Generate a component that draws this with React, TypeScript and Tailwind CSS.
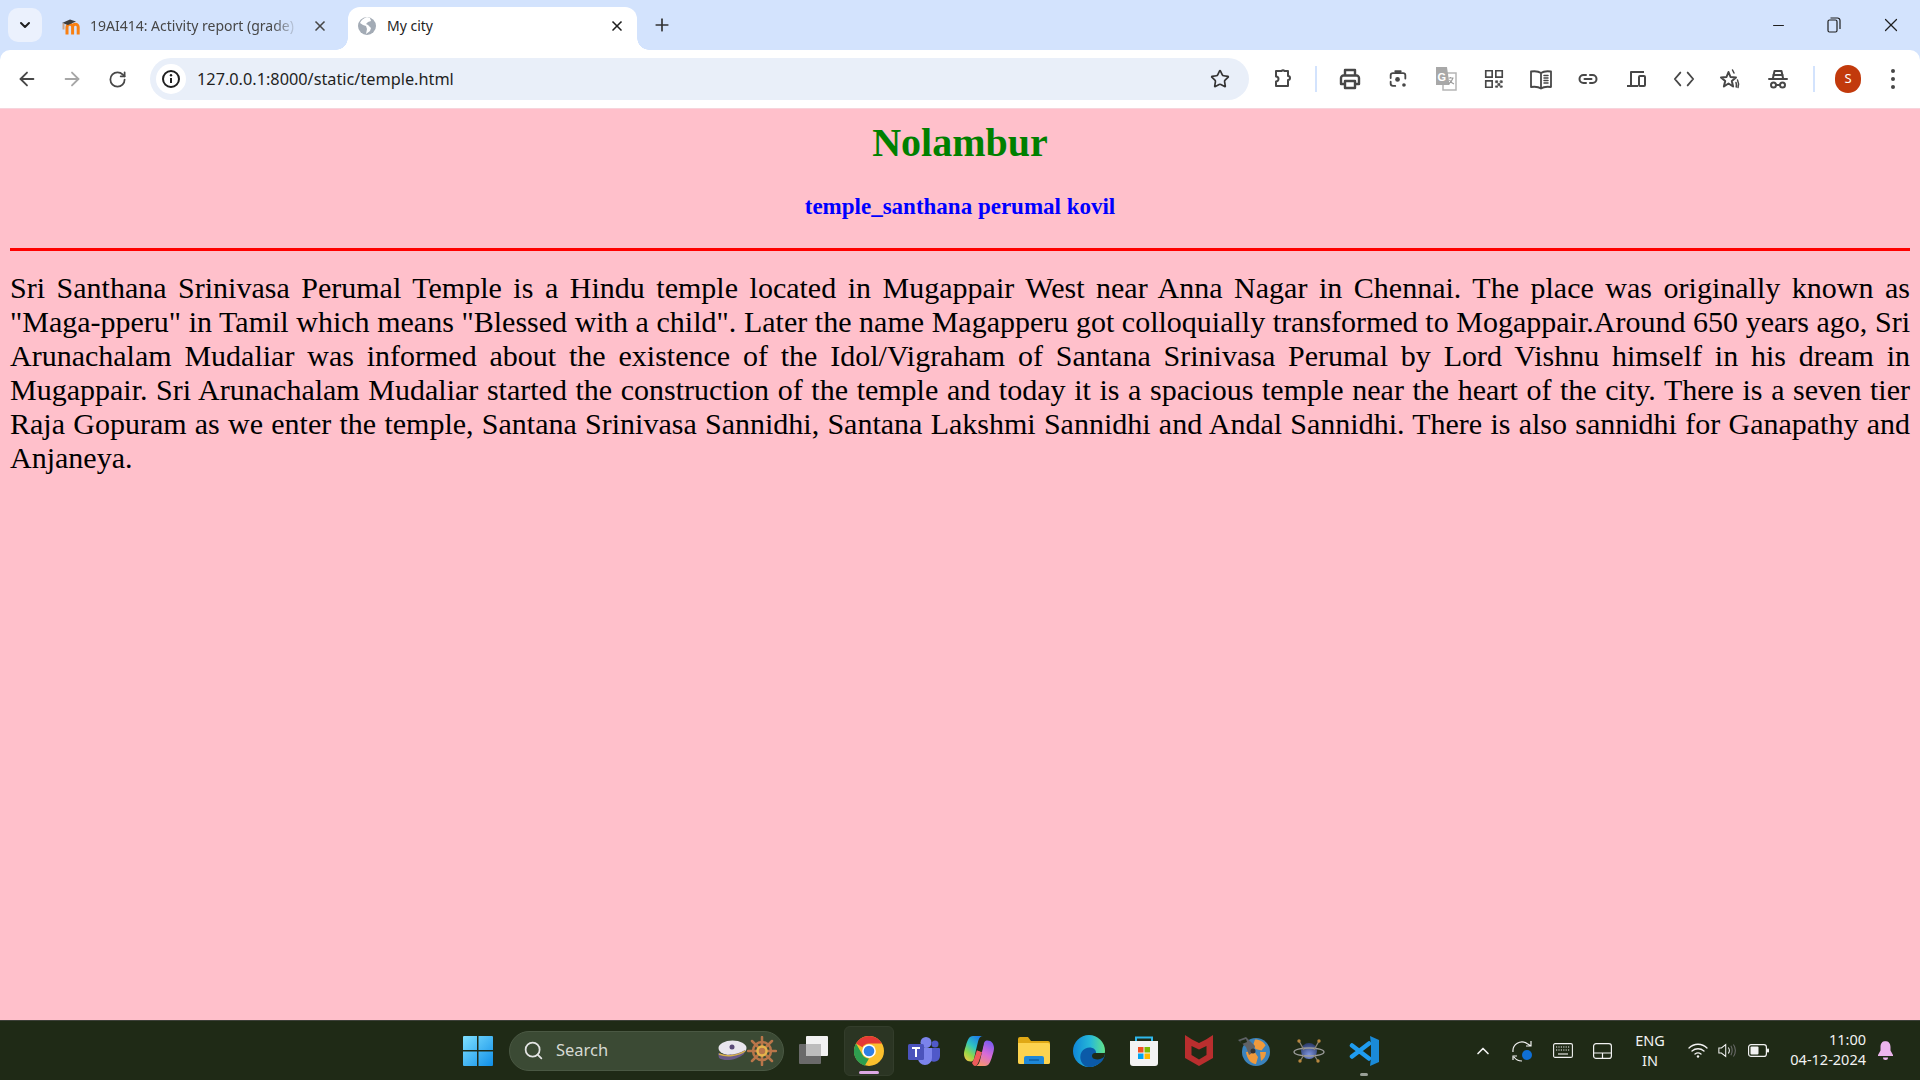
import React from "react";
import { ArrowLeft, ArrowRight, RotateCw, Star, Plus, X, ChevronDown, ChevronUp, Minus, Search } from "lucide-react";

const Slot = ({ w, children }: { w: string; children: React.ReactNode }) => (
  <div className={`${w} flex items-center justify-center shrink-0`}>{children}</div>
);

const I = ({ size = 24, children, vb = "0 0 24 24", stroke = "#474747", sw = 2 }: any) => (
  <svg width={size} height={size} viewBox={vb} fill="none" stroke={stroke} strokeWidth={sw} strokeLinecap="round" strokeLinejoin="round">{children}</svg>
);

const Moodle = () => (
  <svg width="21" height="18" viewBox="0 0 21 18" fill="none">
    <path d="M6 17.500V10a2.800 2.800 0 0 1 5.600 0v7.500M11.600 10a2.800 2.800 0 0 1 5.600 0v7.500" stroke="#f98012" strokeWidth="3" />
    <path d="M1 6l8-3.500 6 2-8 3.500z" fill="#3f3f3f" />
    <path d="M2.500 6.500v6" stroke="#c9a58a" strokeWidth="2" />
  </svg>
);
const Globe = () => (
  <svg width="18" height="18" viewBox="0 0 18 18">
    <circle cx="9" cy="9" r="9" fill="#a3abb5" />
    <path d="M9 0c-3 1-6 3-7 6l3 2 3 1 1 3-1 5 4-3 1-3-3-3-2-1 2-2 3-1-1-3z" fill="#fff" />
  </svg>
);
const Puzzle = () => (
  <I size={24}><path d="M8 5h2.500a2 2 0 0 1 3 0H17v5a2 2 0 0 1 0 4v6H5v-4.500a2.500 2.500 0 0 0 0-5V5z" transform="translate(0 -1)" /></I>
);
const PrinterI = () => (
  <svg width="24" height="24" viewBox="0 0 24 24" fill="none" stroke="#474747" strokeWidth="2.400" strokeLinejoin="round">
    <path d="M7 8V3h10v5" />
    <path d="M6 17H3v-6a2.500 2.500 0 0 1 2.500-2.500h13A2.500 2.500 0 0 1 21 11v6h-3" />
    <path d="M7 14h10v7H7z" />
  </svg>
);
const Camera = () => (
  <I size={22} sw={2}>
    <path d="M9 3.500h6M4 11V8a2.500 2.500 0 0 1 2.500-2.500h11A2.500 2.500 0 0 1 20 8v3.500M4 15v2a2.500 2.500 0 0 0 2.500 2.500H9" />
    <circle cx="11.500" cy="12.500" r="2.600" fill="#474747" stroke="none" />
    <circle cx="18.500" cy="18.500" r="2" fill="#474747" stroke="none" />
  </I>
);
const Translate = () => (
  <svg width="22" height="24" viewBox="0 0 22 24">
    <rect x="8" y="6" width="13" height="17" fill="#fff" stroke="#b5b5b5" strokeWidth="1.500" />
    <path d="M1 0h11l2.500 18H1z" fill="#a8a8a8" />
    <text x="2.500" y="13.500" fontSize="11" fontWeight="700" fill="#fff" fontFamily="Liberation Sans, sans-serif">G</text>
    <path d="M13.500 11h5M15.500 10v1.500M18 11c-1 3-3 5-4.500 6M14.500 13c1 2 2.500 3 4.500 4" stroke="#9a9a9a" strokeWidth="1.100" fill="none" />
  </svg>
);
const Qr = () => (
  <I size={22} sw={1.8}>
    <path d="M3 3h7v7H3zM14 3h7v7h-7zM3 14h7v7H3z" strokeLinecap="butt" strokeLinejoin="miter" />
    <path d="M14 14h2v2h-2zM19 14h2v2h-2zM16.500 17h2v2h-2zM14 19.500h2v1.500h-2zM19 19.500h2v1.500h-2z" strokeWidth="0.800" fill="#474747" />
  </I>
);
const Book = () => (
  <I size={24} sw={1.8}>
    <path d="M12 6C10 4.500 6 4 2 4.500V20c4-.5 8 0 10 1.500 2-1.500 6-2 10-1.500V4.500C18 4 14 4.500 12 6zM12 6v15.500" />
    <path d="M15 8.500h4M15 11h4M15 13.500h4M15 16h4" strokeWidth="1.500" />
  </I>
);
const LinkI = () => (
  <I size={24} sw={2}>
    <path d="M10 8H7.500a4 4 0 0 0 0 8H10M14 8h2.500a4 4 0 0 1 0 8H14M8.500 12h7" />
  </I>
);
const Devices = () => (
  <I size={24} sw={2}>
    <path d="M20 5H7v13M3 19h11" strokeLinecap="butt" />
    <rect x="15" y="9" width="6" height="10" rx="1" />
  </I>
);
const CodeI = () => (
  <I size={22} sw={2}><path d="M8 5l-6 7 6 7M16 5l6 7-6 7" /></I>
);
const StarFx = () => (
  <I size={24} sw={2}>
    <path d="M10.500 5l2 5 5.500.5-4.200 3.500 1.300 5.500-4.600-3-4.600 3 1.300-5.500L3 10.500l5.500-.5z" />
    <path d="M14.500 3c.5 1 1 2 1.500 3M19.500 13c1 2 1.200 5 .5 7.500M18 15.500c.5 1.500.5 3 .2 4.500" strokeWidth="1.500" />
  </I>
);
const Spy = () => (
  <I size={24} sw={2}>
    <path d="M7 11l1.500-7h7L17 11M3 12h18" />
    <path d="M7.500 8h9" />
    <circle cx="7.500" cy="18" r="2.500" /><circle cx="16.500" cy="18" r="2.500" /><path d="M10 18h4" />
  </I>
);
const InfoI = () => (
  <svg width="22" height="22" viewBox="0 0 22 22" fill="none">
    <circle cx="11" cy="11" r="8" stroke="#1f1f1f" strokeWidth="2" />
    <path d="M11 10v5" stroke="#1f1f1f" strokeWidth="2" />
    <circle cx="11" cy="7.300" r="1.200" fill="#1f1f1f" />
  </svg>
);
const Restore = () => (
  <svg width="14" height="16" viewBox="0 0 14 16" fill="none" stroke="#1f1f1f" strokeWidth="1.200">
    <rect x="1" y="3" width="9" height="12" rx="1.500" />
    <path d="M3.500 1h7A2.500 2.500 0 0 1 13 3.500V12" />
  </svg>
);

const WinLogo = () => (
  <svg width="30" height="30" viewBox="0 0 30 30">
    <defs>
      <linearGradient id="wg" x1="0" y1="0" x2="1" y2="1"><stop offset="0" stopColor="#7fe0ff" /><stop offset="1" stopColor="#0f8fe8" /></linearGradient>
    </defs>
    <path d="M0 1a1 1 0 0 1 1-1h13v14H0zM15.500 0H29a1 1 0 0 1 1 1v13H15.500zM0 15.500h14V30H1a1 1 0 0 1-1-1zM15.500 15.500H30V29a1 1 0 0 1-1 1H15.500z" fill="url(#wg)" />
  </svg>
);
const Hat = () => (
  <svg width="30" height="22" viewBox="0 0 30 22">
    <ellipse cx="15.500" cy="8" rx="14" ry="7.500" fill="#e9e6ee" />
    <path d="M1 13c7 3 20 2 27-3l-1 4c-7 6-19 8-25 4z" fill="#6a5a88" />
    <path d="M2 14c7 3 19 2 26-3" stroke="#d8b24a" strokeWidth="1.500" fill="none" />
    <circle cx="15" cy="7" r="2.500" fill="#5a4a78" />
  </svg>
);
const Wheel = () => (
  <svg width="30" height="30" viewBox="0 0 30 30" fill="none">
    <g stroke="#b9764a" strokeWidth="2.500" strokeLinecap="round">
      <path d="M15 1v28M1 15h28M5 5l20 20M25 5L5 25" />
    </g>
    <circle cx="15" cy="15" r="9" stroke="#b9764a" strokeWidth="2.500" />
    <circle cx="15" cy="15" r="4.500" stroke="#e5b54c" strokeWidth="2.500" />
  </svg>
);
const TaskView = () => (
  <svg width="30" height="29" viewBox="0 0 30 29">
    <rect x="7" y="0" width="22" height="20" rx="1" fill="#f2f2f2" />
    <rect x="0" y="8" width="22" height="20" rx="1" fill="#6a6a6a" />
    <rect x="7" y="8" width="15" height="12" fill="#bdbdbd" />
  </svg>
);
const ChromeI = () => (
  <svg width="30" height="30" viewBox="0 0 48 48">
    <circle cx="24" cy="24" r="24" fill="#fbc02d" />
    <path d="M24 0a24 24 0 0 1 20.800 12H24a12 12 0 0 0-10.400 6L3.200 12A24 24 0 0 1 24 0z" fill="#e53935" />
    <path d="M3.200 12l10.400 18a12 12 0 0 0 10.400 6l-6.800 11.400A24 24 0 0 1 3.200 12z" fill="#2e9e4f" />
    <circle cx="24" cy="24" r="11" fill="#fff" />
    <circle cx="24" cy="24" r="8.500" fill="#2f7fe6" />
  </svg>
);
const Teams = () => (
  <svg width="32" height="28" viewBox="0 0 32 28">
    <circle cx="18" cy="5.500" r="5.500" fill="#7b83eb" />
    <circle cx="27" cy="7" r="3.500" fill="#5059c9" />
    <path d="M22 11h9a1 1 0 0 1 1 1v7a6 6 0 0 1-9 5z" fill="#5059c9" />
    <path d="M9 11h15v10a7 7 0 0 1-14 0z" fill="#7b83eb" />
    <rect x="0" y="7" width="16" height="16" rx="1.500" fill="#4b53bc" />
    <path d="M4 11h8M8 11v9" stroke="#fff" strokeWidth="2" />
  </svg>
);
const Copilot = () => (
  <svg width="30" height="30" viewBox="0 0 30 30">
    <defs>
      <linearGradient id="c1" x1="0.700" y1="0" x2="0.100" y2="1"><stop offset="0" stopColor="#1e7fe8" /><stop offset=".4" stopColor="#2fc4c0" /><stop offset=".7" stopColor="#8fd84a" /><stop offset="1" stopColor="#f7c948" /></linearGradient>
      <linearGradient id="c2" x1="0.700" y1="0" x2="0.300" y2="1"><stop offset="0" stopColor="#7a5bf0" /><stop offset=".5" stopColor="#d86bd8" /><stop offset="1" stopColor="#f7956a" /></linearGradient>
    </defs>
    <path d="M9 0h10c-2.500 0-3.800 1.500-4.800 5L12 14l-2 9c-.7 2-2 2.500-3.500 2.500C2.500 25.500 0 22 0 18c0-2 .7-5 1.800-8C3.500 4 5 0 9 0z" fill="url(#c1)" />
    <path d="M21 30H11c2.500 0 3.800-1.500 4.800-5l2.200-9 2-9c.7-2 2-2.500 3.500-2.500 4 0 6.500 3.500 6.500 7.500 0 2-.7 5-1.800 8C26.500 26 25 30 21 30z" fill="url(#c2)" />
    <path d="M10 23l3-9 5 2-3 9c-1 3-2.500 5-4 5-1 0-2-1-3-3z" fill="#ee5a5a" />
    <path d="M15.500 9l4-1-2 8-5-2z" fill="#1f2a16" />
  </svg>
);
const Folder = () => (
  <svg width="32" height="27" viewBox="0 0 32 27">
    <path d="M0 2a2 2 0 0 1 2-2h8l3 4h17a2 2 0 0 1 2 2v19a2 2 0 0 1-2 2H2a2 2 0 0 1-2-2z" fill="#e0a815" />
    <path d="M0 6h30a2 2 0 0 1 2 2v17a2 2 0 0 1-2 2H2a2 2 0 0 1-2-2z" fill="#fcd34f" />
    <path d="M6 27v-6a2 2 0 0 1 2-2h16a2 2 0 0 1 2 2v6z" fill="#1e88d8" />
    <path d="M11 23h10" stroke="#0c5fa5" strokeWidth="1.500" />
  </svg>
);
const Edge = () => (
  <svg width="32" height="32" viewBox="0 0 32 32">
    <defs>
      <linearGradient id="e1" x1="0" y1="0.500" x2="1" y2="0.500"><stop offset="0" stopColor="#0f86d8" /><stop offset=".55" stopColor="#27b9d8" /><stop offset="1" stopColor="#62e38a" /></linearGradient>
    </defs>
    <circle cx="16" cy="16" r="16" fill="url(#e1)" />
    <path d="M13 31.500C6 28 5 17 12.500 13.500 18 11 23.500 14 23 18l9 0c0 3-1 5-2.500 7.500C26 30 19 33.500 13 31.500z" fill="#0b5aa8" />
    <path d="M32 18H22c-3.500 0-4 4.500-1 5.800 3.500 1.200 7 .6 10-1.800.5-1.500 1-2.500 1-4z" fill="#1f2a16" />
  </svg>
);
const Store = () => (
  <svg width="30" height="30" viewBox="0 0 30 30">
    <path d="M7 5V1.500h16V5" fill="none" stroke="#2fb8ec" strokeWidth="2" />
    <path d="M1 5h28v22a3 3 0 0 1-3 3H4a3 3 0 0 1-3-3z" fill="#f3f3f3" />
    <rect x="9" y="11" width="5.500" height="5.500" fill="#f25022" /><rect x="15.500" y="11" width="5.500" height="5.500" fill="#7fba00" />
    <rect x="9" y="17.500" width="5.500" height="5.500" fill="#00a4ef" /><rect x="15.500" y="17.500" width="5.500" height="5.500" fill="#ffb900" />
  </svg>
);
const McAfee = () => (
  <svg width="28" height="31" viewBox="0 0 28 31">
    <path d="M0 0l7 4.500L14 8l7-3.500L28 0v23l-14 8-14-8z" fill="#b92e2e" />
    <path d="M6.500 11l7.500 3.500 7.500-3.500v9l-7.500 4.500-7.500-4.500z" fill="#1f2a16" />
  </svg>
);
const Orb = () => (
  <svg width="32" height="32" viewBox="0 0 32 32">
    <circle cx="18" cy="17" r="14" fill="#3b83bd" />
    <path d="M17 4.500c5 0 9 2.500 10.500 6l-4 5-6-1.500-2-5zM8 17l8-1 4 6-2 7c-5 0-9-5-10-12z" fill="#ef9a3c" />
    <path d="M22 17l6 0c0 4-2 7-5 9z" fill="#ef9a3c" />
    <path d="M0 5l8-3 9 9-3 7-3 2-3-8z" fill="#5f6266" />
    <path d="M2 6l6-2 1 3-5 2z" fill="#1f2a16" />
    <circle cx="15" cy="16" r="2.500" fill="#333" />
  </svg>
);
const Atom = () => (
  <svg width="32" height="28" viewBox="0 0 32 28" fill="none">
    <defs>
      <radialGradient id="at" cx=".5" cy=".75" r=".7"><stop offset="0" stopColor="#7f96e0" /><stop offset="1" stopColor="#2f3f70" /></radialGradient>
    </defs>
    <circle cx="16" cy="14" r="8" fill="url(#at)" />
    <ellipse cx="16" cy="15" rx="15" ry="4" stroke="#9c9c9c" strokeWidth="1.300" />
    <path d="M6 4l5 9M26 4l-5 9M7 24l4-6M25 24l-4-6" stroke="#8a8478" strokeWidth="1.300" />
    <circle cx="6" cy="4" r="1.700" fill="#b9873f" /><circle cx="26" cy="4" r="1.700" fill="#b9873f" />
    <circle cx="7" cy="24" r="1.700" fill="#b9873f" /><circle cx="25" cy="24" r="1.700" fill="#b9873f" />
  </svg>
);
const VSCode = () => (
  <svg width="30" height="30" viewBox="0 0 30 30" fill="none">
    <path d="M3 9.500l17 13M3 20.500l17-13" stroke="#1f9cf0" strokeWidth="4.500" strokeLinecap="round" />
    <path d="M21 0l9 4v22l-9 4 1-8V8z" fill="#1a8ad8" />
  </svg>
);

const W = "#f2f2f2";
const Sync = () => (
  <svg width="22" height="22" viewBox="0 0 22 22" fill="none" stroke={W} strokeWidth="1.200">
    <path d="M1 12a9 9 0 0 1 14-8.500L19 6M19 1v5h-5" />
    <path d="M1 20v-4h4M2 17c2 3 5 4 8 4" />
    <circle cx="15" cy="15" r="5" fill="#0f6fd6" stroke="none" />
  </svg>
);
const Kbd = () => (
  <svg width="20" height="15" viewBox="0 0 20 15" fill="none" stroke={W} strokeWidth="1.100">
    <rect x=".6" y=".6" width="18.800" height="13.800" rx="1.500" />
    <path d="M3 4h14M3 7h14" strokeDasharray="1.200 1.200" />
    <path d="M5 11h10" />
  </svg>
);
const Touchpad = () => (
  <svg width="19" height="16" viewBox="0 0 19 16" fill="none" stroke={W} strokeWidth="1.200">
    <rect x=".6" y=".6" width="17.800" height="14.800" rx="2.500" />
    <path d="M1 10h17M9.500 10v5" />
  </svg>
);
const Wifi = () => (
  <svg width="20" height="15" viewBox="0 0 20 15" fill="none" stroke={W} strokeWidth="1.300" strokeLinecap="round">
    <path d="M1 5c5-5 13-5 18 0M4 8c3.500-3 8.500-3 12 0M7 11c1.800-1.400 4.200-1.400 6 0" />
    <circle cx="10" cy="13.500" r="1.200" fill={W} stroke="none" />
  </svg>
);
const Vol = () => (
  <svg width="21" height="17" viewBox="0 0 21 17" fill="none" stroke={W} strokeWidth="1.200">
    <path d="M1 5.500h3L9 1.500v14L4 11.500H1z" />
    <path d="M12 5c1.500 2 1.500 5 0 7" />
    <path d="M15 3c2 3 2 8 0 11M18 1.500c3 4 3 10 0 14" stroke="#6e6e6e" />
  </svg>
);
const Batt = () => (
  <svg width="21" height="13" viewBox="0 0 21 13" fill="none">
    <rect x=".6" y=".6" width="17.800" height="11.800" rx="2.500" stroke={W} strokeWidth="1.200" />
    <rect x="2.500" y="2.500" width="8" height="8" rx="1" fill={W} />
    <rect x="19" y="4.500" width="2" height="4" rx=".8" fill={W} />
  </svg>
);
const BellI = () => (
  <svg width="17" height="19" viewBox="0 0 17 19" fill="#ecb4ec">
    <path d="M8.500 0C5 0 3.500 3 3.500 6v3.500L1 14v1h15v-1l-2.500-4.500V6c0-3-1.500-6-5.500-6z" />
    <path d="M6 16.500h5a2.500 2.500 0 0 1-5 0z" />
  </svg>
);

const TEXT = `Sri Santhana Srinivasa Perumal Temple is a Hindu temple located in Mugappair West near Anna Nagar in Chennai. The place was originally known as "Maga-pperu" in Tamil which means "Blessed with a child". Later the name Magapperu got colloquially transformed to Mogappair.Around 650 years ago, Sri Arunachalam Mudaliar was informed about the existence of the Idol/Vigraham of Santana Srinivasa Perumal by Lord Vishnu himself in his dream in Mugappair. Sri Arunachalam Mudaliar started the construction of the temple and today it is a spacious temple near the heart of the city. There is a seven tier Raja Gopuram as we enter the temple, Santana Srinivasa Sannidhi, Santana Lakshmi Sannidhi and Andal Sannidhi. There is also sannidhi for Ganapathy and Anjaneya.`;

const ui = "font-['Noto_Sans','Open_Sans',sans-serif]";

export default function App() {
  return (
    <div className={`w-[1920px] h-[1080px] flex flex-col overflow-hidden bg-[#d3e3fd] ${ui}`}>
      {/* tab strip */}
      <div className="h-[50px] shrink-0 bg-[#d3e3fd] flex items-end">
        <div className="ml-[8px] mb-[8px] w-[34px] h-[34px] rounded-[10px] bg-[#ebf1fd] flex items-center justify-center">
          <ChevronDown size={16} strokeWidth={3} color="#1f1f1f" />
        </div>
        <div className="ml-[19px] w-[287px] h-[43px] pb-[6px] flex items-center">
          <Moodle />
          <span className="ml-[8px] w-[208px] py-[2px] overflow-hidden whitespace-nowrap text-[14px] text-[#474747] [mask-image:linear-gradient(to_right,black_88%,transparent)]">19AI414: Activity report (grade)</span>
          <span className="ml-[14px] flex"><X size={16} strokeWidth={2.500} color="#474747" /></span>
        </div>
        <div className="w-[289px] h-[43px] bg-white rounded-t-[12px] flex items-center pl-[10px] pb-[6px] relative">
          <div className="absolute left-[-12px] bottom-0 w-[12px] h-[12px] bg-[radial-gradient(circle_at_0_0,#d3e3fd_11.500px,white_12px)]" />
          <div className="absolute right-[-12px] bottom-0 w-[12px] h-[12px] bg-[radial-gradient(circle_at_100%_0,#d3e3fd_11.500px,white_12px)]" />
          <Globe />
          <span className="ml-[11px] w-[222px] text-[14px] text-[#1f1f1f]">My city</span>
          <span className="flex"><X size={16} strokeWidth={2.500} color="#1f1f1f" /></span>
        </div>
        <div className="ml-[15px] mb-[15px] flex"><Plus size={20} strokeWidth={2} color="#333" /></div>
        <div className="ml-auto h-[50px] flex items-center">
          <Slot w="w-[56px]"><Minus size={17} strokeWidth={1.500} color="#1f1f1f" /></Slot>
          <Slot w="w-[56px]"><Restore /></Slot>
          <Slot w="w-[58px]"><X size={22} strokeWidth={1.300} color="#1f1f1f" /></Slot>
        </div>
      </div>

      {/* toolbar */}
      <div className="h-[59px] shrink-0 bg-white rounded-t-[10px] flex items-center border-b border-[#f6d4dc]">
        <Slot w="w-[54px]"><ArrowLeft size={22} color="#474747" /></Slot>
        <Slot w="w-[36px]"><ArrowRight size={22} color="#a6a6a6" /></Slot>
        <Slot w="w-[54px]"><RotateCw size={19} strokeWidth={2.200} color="#474747" /></Slot>
        <div className="ml-[6px] w-[1099px] h-[42px] rounded-full bg-[#e9eff9] flex items-center pl-[6px]">
          <div className="w-[30px] h-[30px] rounded-full bg-white flex items-center justify-center"><InfoI /></div>
          <span className="ml-[11px] text-[16.300px] text-[#1f1f1f] whitespace-nowrap">127.0.0.1:8000/static/temple.html</span>
          <div className="ml-auto mr-[19px] flex"><Star size={20} strokeWidth={2} color="#333" /></div>
        </div>
        <div className="ml-[10px] w-[48px] flex justify-center"><Puzzle /></div>
        <div className="ml-[8px] w-[2px] h-[26px] bg-[#d3e3fd]" />
        <Slot w="w-[66px]"><PrinterI /></Slot>
        <Slot w="w-[30px]"><Camera /></Slot>
        <Slot w="w-[66px]"><Translate /></Slot>
        <Slot w="w-[30px]"><Qr /></Slot>
        <Slot w="w-[64px]"><Book /></Slot>
        <Slot w="w-[30px]"><LinkI /></Slot>
        <Slot w="w-[66px]"><Devices /></Slot>
        <Slot w="w-[30px]"><CodeI /></Slot>
        <Slot w="w-[62px]"><StarFx /></Slot>
        <Slot w="w-[34px]"><Spy /></Slot>
        <div className="ml-[18px] w-[2px] h-[26px] bg-[#d3e3fd]" />
        <div className="ml-[20px] w-[26px] h-[28px] rounded-full bg-[#c23a0c] text-white text-[13px] flex items-center justify-center">S</div>
        <div className="ml-[30px] flex flex-col gap-[4px]">
          <div className="w-[4px] h-[4px] rounded-full bg-[#474747]" />
          <div className="w-[4px] h-[4px] rounded-full bg-[#474747]" />
          <div className="w-[4px] h-[4px] rounded-full bg-[#474747]" />
        </div>
      </div>

      {/* page */}
      <div className="flex-1 bg-[#ffc0cb] px-[10px] font-['Liberation_Serif',serif] overflow-hidden">
        <h1 className="mt-[11px] text-center text-[40px] leading-[46px] font-bold text-[#008000]">Nolambur</h1>
        <h3 className="mt-[27px] text-center text-[23px] leading-[27px] font-bold text-[#0000ff]">temple_santhana perumal kovil</h3>
        <div className="mt-[28px] h-[3px] bg-[#ff0000]" />
        <p className="mt-[20px] text-[30px] leading-[34px] text-justify text-black">{TEXT}</p>
      </div>

      {/* taskbar */}
      <div className="h-[60px] shrink-0 bg-[#1f2a16] border-t border-[#3c3f38] flex items-center text-[#f2f2f2]">
        <Slot w="ml-[453px] w-[50px]"><WinLogo /></Slot>
        <div className="ml-[6px] w-[275px] h-[40px] rounded-full bg-[#3b4a34] border border-[#4a5843] flex items-center pl-[13px] pr-[6px]">
          <Search size={21} strokeWidth={2} color="#e4e4e4" />
          <span className="ml-[12px] text-[16.500px] text-[#d6d9d3]">Search</span>
          <div className="ml-auto flex items-center"><Hat /><Wheel /></div>
        </div>
        <div className="ml-[5px] flex gap-[5px] items-center">
          <Slot w="w-[50px]"><TaskView /></Slot>
          <div className="w-[50px] h-[50px] rounded-[6px] bg-[#2b3523] border border-[#333d2b] flex items-center justify-center relative">
            <ChromeI />
            <div className="absolute bottom-[1px] left-[14px] w-[20px] h-[3px] rounded-full bg-[#dca8e4]" />
          </div>
          <Slot w="w-[50px]"><Teams /></Slot>
          <Slot w="w-[50px]"><Copilot /></Slot>
          <Slot w="w-[50px]"><Folder /></Slot>
          <Slot w="w-[50px]"><Edge /></Slot>
          <Slot w="w-[50px]"><Store /></Slot>
          <Slot w="w-[50px]"><McAfee /></Slot>
          <Slot w="w-[50px]"><Orb /></Slot>
          <Slot w="w-[50px]"><Atom /></Slot>
          <div className="w-[50px] h-[50px] flex items-center justify-center relative">
            <VSCode />
            <div className="absolute bottom-[0px] left-[21px] w-[8px] h-[3px] rounded-full bg-[#9aa097]" />
          </div>
        </div>
        <div className="ml-[79px] flex items-center">
          <Slot w="w-[30px]"><ChevronUp size={20} strokeWidth={2} color="#f2f2f2" /></Slot>
          <Slot w="w-[50px]"><Sync /></Slot>
          <Slot w="w-[30px]"><Kbd /></Slot>
          <Slot w="w-[48px]"><Touchpad /></Slot>
          <div className="w-[48px] text-center text-[14.500px] leading-[20px] pb-[1px]">ENG<br />IN</div>
          <Slot w="ml-[4px] w-[40px]"><Wifi /></Slot>
          <Slot w="w-[18px]"><Vol /></Slot>
          <Slot w="w-[44px]"><Batt /></Slot>
          <div className="w-[86px] text-right text-[14.500px] leading-[20px] whitespace-nowrap pb-[3px]">11:00<br />04-12-2024</div>
          <Slot w="w-[38px]"><BellI /></Slot>
        </div>
      </div>
    </div>
  );
}
